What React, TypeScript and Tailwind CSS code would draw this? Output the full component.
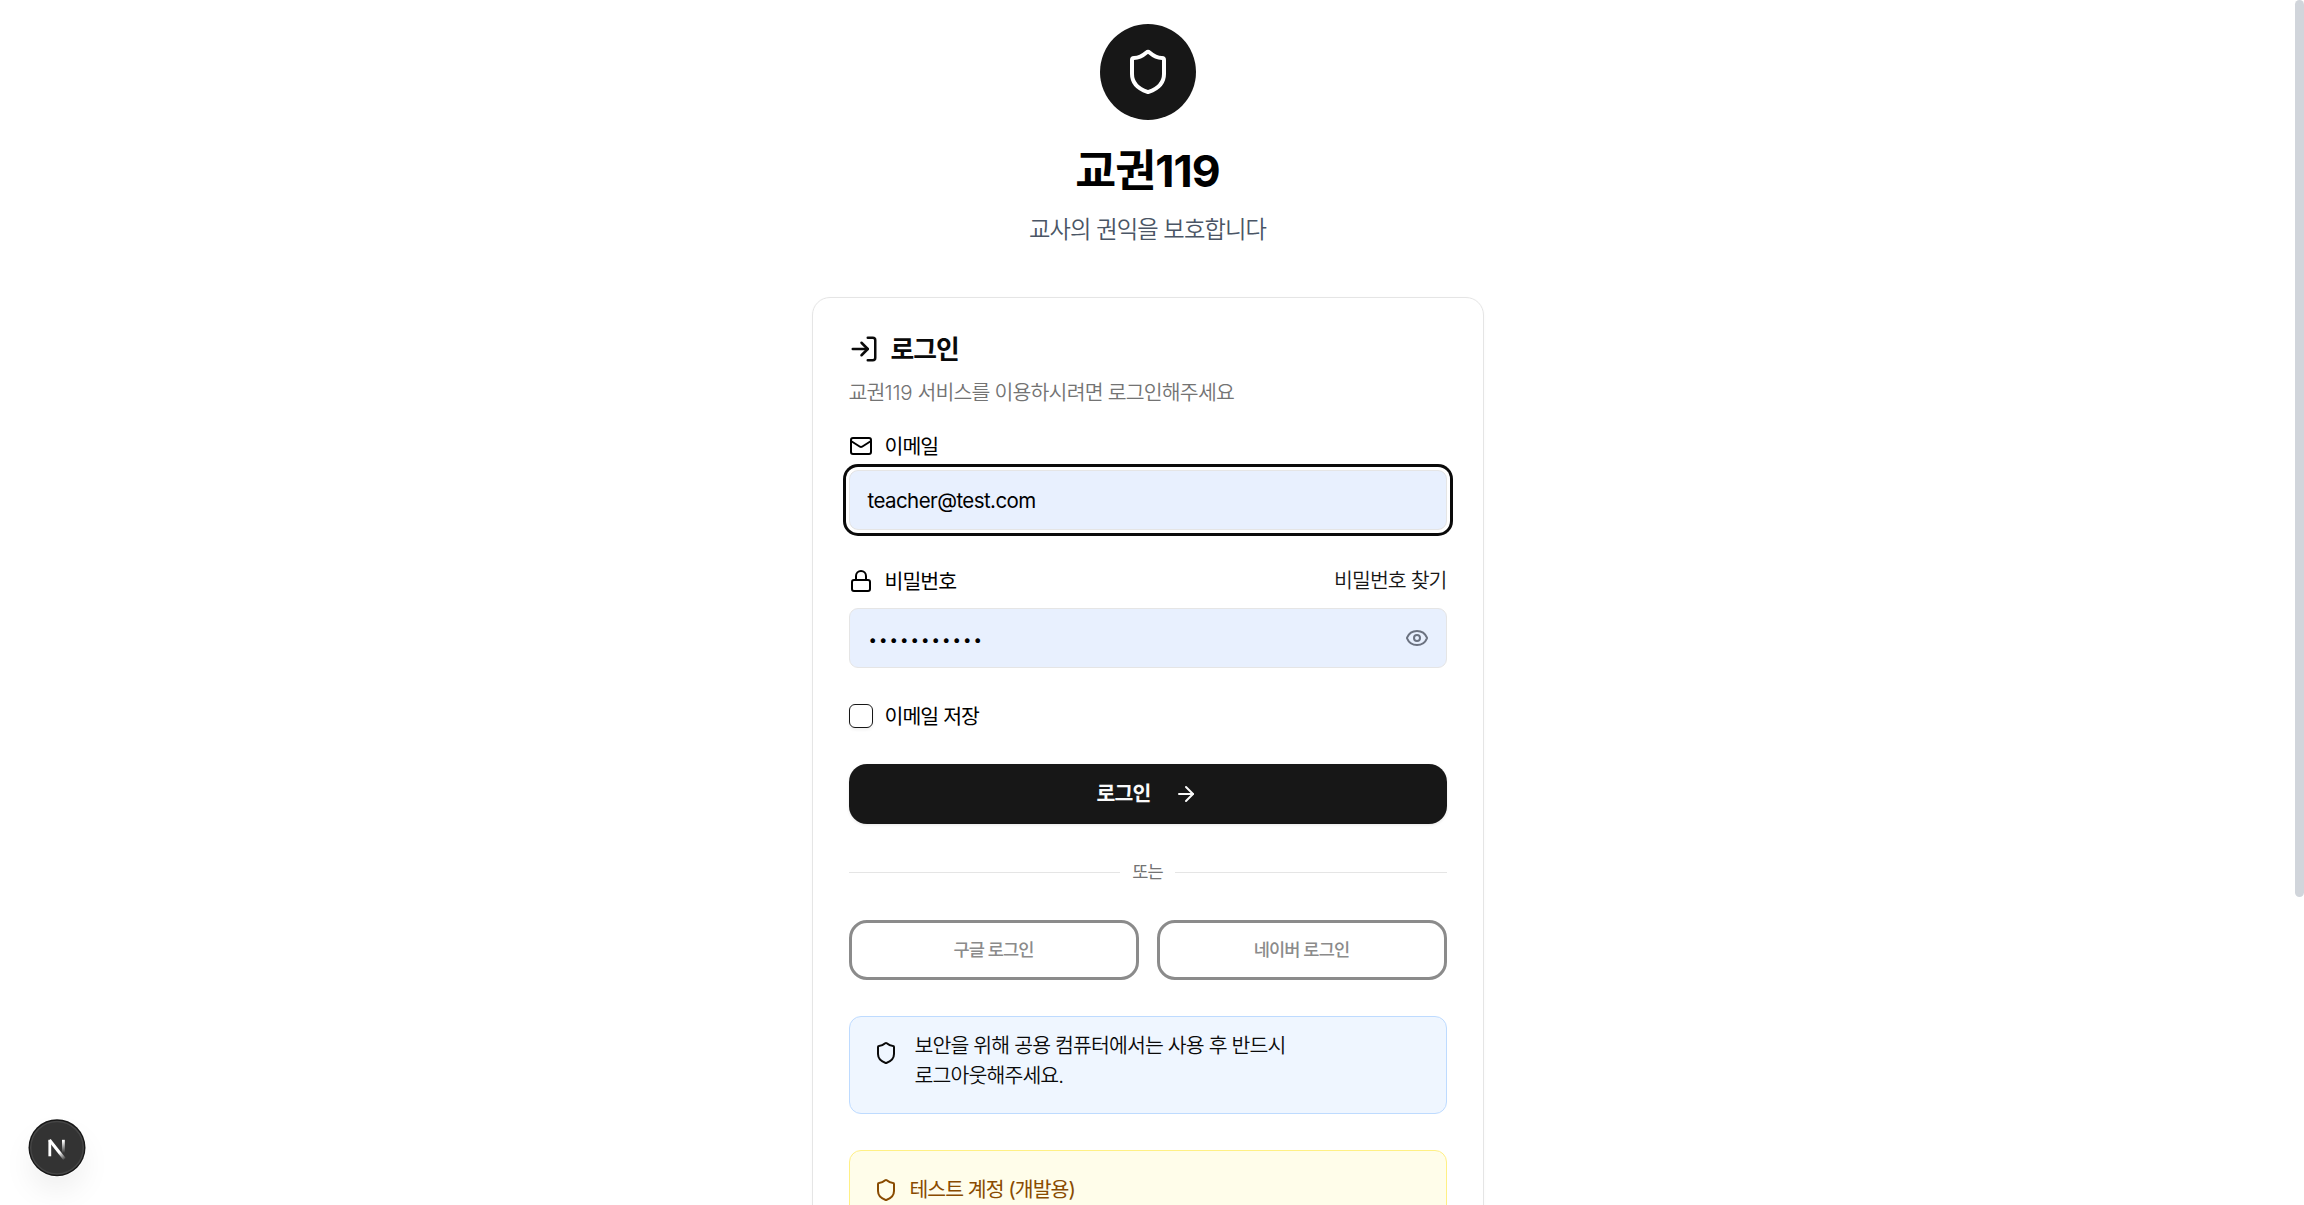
import type { ReactNode } from "react";
import { ArrowRight, Eye, Lock, LogIn, Mail, Shield } from "lucide-react";

function NextBadge() {
  return (
    <div className="absolute left-[28px] top-[1119px] h-[58px] w-[58px] rounded-full shadow-[0_16px_32px_-4px_rgba(0,0,0,0.08)]">
      <svg viewBox="0 0 58 58" className="h-full w-full" fill="none">
        <defs>
          <linearGradient id="diag" x1="32" y1="33" x2="37.5" y2="40.5" gradientUnits="userSpaceOnUse">
            <stop stopColor="#fff" />
            <stop offset="1" stopColor="#fff" stopOpacity="0" />
          </linearGradient>
          <linearGradient id="stem" x1="0" y1="22" x2="0" y2="34" gradientUnits="userSpaceOnUse">
            <stop stopColor="#fff" />
            <stop offset="1" stopColor="#fff" stopOpacity="0" />
          </linearGradient>
        </defs>
        <circle cx="29" cy="28.7" r="28.5" fill="#171717" />
        <circle cx="29" cy="28.7" r="26.3" fill="#333" stroke="#454545" strokeWidth="1.5" />
        <path d="M21.5 21L36.5 40" stroke="url(#diag)" strokeWidth="3" />
        <path d="M21.8 37.3V20.8" stroke="#fff" strokeWidth="2.8" />
        <path d="M35.4 20.8V34" stroke="url(#stem)" strokeWidth="2.8" />
      </svg>
    </div>
  );
}

function Label({ icon, children }: { icon: ReactNode; children: ReactNode }) {
  return (
    <div className="flex h-6 items-center gap-3 text-[20.5px] font-normal leading-6 text-black">
      {icon}
      <span className="pt-0.5">{children}</span>
    </div>
  );
}

export default function App() {
  return (
    <div className="relative h-[1205px] w-full overflow-hidden bg-white pr-[9px] font-['Inter','Noto_Sans_CJK_KR',sans-serif] font-[350] tracking-[-0.93px] text-[#0a0a0a]">
      <main className="mx-auto w-[672px] pt-6">
        <header className="flex flex-col items-center">
          <div className="flex h-24 w-24 items-center justify-center rounded-full bg-[#171717] text-white">
            <Shield size={48} strokeWidth={2} />
          </div>
          <h1 className="mt-6 text-[44.5px] font-bold leading-[54px] text-black">
            교권<span className="tracking-[-0.02em]">119</span>
          </h1>
          <p className="mt-[14px] h-9 text-[23.3px] leading-9 text-[#4a5565]">교사의 권익을 보호합니다</p>
        </header>

        <section className="mt-[49px] h-[1000px] rounded-[18px] border border-[#e5e5e5] px-9 pt-9 shadow-[0_1px_3px_rgba(0,0,0,0.03)]">
          <h2 className="flex h-[30px] items-center gap-3 text-[25.8px] font-semibold leading-[30px]">
            <LogIn size={30} />
            <span className="pt-0.5">로그인</span>
          </h2>
          <p className="mt-[14px] h-[30px] text-[20.5px] leading-[30px] tracking-[-0.82px] text-[#737373]">
            교권<span className="tracking-[-0.01em]">119</span> 서비스를 이용하시려면 로그인해주세요
          </p>

          <div className="mt-[26px]">
            <Label icon={<Mail size={24} />}>이메일</Label>
            <div className="mt-3 flex h-[60px] items-center rounded-[9px] border border-[#e5e5e5] bg-[#e8f0fe] px-[18px] pt-0.5 text-[20.5px] font-normal tracking-[-0.028em] text-black shadow-[0_0_0_3px_#fff,0_0_0_6px_#0a0a0a]">
              teacher@test.com
            </div>
          </div>

          <div className="mt-[39px]">
            <div className="flex items-center justify-between">
              <Label icon={<Lock size={24} />}>비밀번호</Label>
              <a className="text-[20.5px] leading-6 text-[#171717]">비밀번호 찾기</a>
            </div>
            <div className="mt-[15px] flex h-[60px] items-center justify-between rounded-[9px] border border-[#e5e5e5] bg-[#e8f0fe] px-[17px] text-black">
              <div className="flex pl-px pt-0.5 text-[15px] font-normal leading-none tracking-normal">
                {Array.from({ length: 11 }, (_, i) => (
                  <span key={i} className="w-[10.5px] text-center">•</span>
                ))}
              </div>
              <Eye size={24} className="text-[#6b7280]" />
            </div>
          </div>

          <div className="mt-9">
            <Label icon={<span className="h-6 w-6 rounded-[6px] border border-[#171717] shadow-[0_2px_3px_rgba(0,0,0,0.06)]" />}>
              이메일 저장
            </Label>
          </div>

          <button className="mt-9 flex h-[60px] w-full items-center justify-center gap-6 rounded-[18px] bg-[#171717] text-[20.5px] font-semibold text-[#fafafa] shadow-[0_1px_3px_rgba(0,0,0,0.1)]">
            <span>로그인</span>
            <ArrowRight size={24} />
          </button>

          <div className="mt-9 flex h-6 items-center gap-3 text-[17.6px] font-normal leading-6 text-[#737373]">
            <span className="h-px flex-1 bg-[#e5e5e5]" />
            <span>또는</span>
            <span className="h-px flex-1 bg-[#e5e5e5]" />
          </div>

          <div className="mt-9 grid grid-cols-2 gap-[18px] text-[17.6px] font-medium text-[#8b8b8b]">
            <button className="h-[60px] rounded-[18px] border-[3px] border-[#8b8b8b]">구글 로그인</button>
            <button className="h-[60px] rounded-[18px] border-[3px] border-[#8b8b8b]">네이버 로그인</button>
          </div>

          <div className="mt-9 flex h-[98px] gap-[17px] rounded-xl border border-[#bedbff] bg-[#eff6ff] pl-6 pt-[14px]">
            <Shield size={24} className="mt-[10px]" />
            <p className="text-[20.5px] leading-[30px] tracking-[-0.88px]">
              보안을 위해 공용 컴퓨터에서는 사용 후 반드시
              <br />
              로그아웃해주세요.
            </p>
          </div>

          <div className="mt-9 h-[200px] rounded-xl border border-[#fff085] bg-[#fffdea] pl-6 pt-[27px] text-[#894b00]">
            <div className="flex h-6 items-center gap-3 text-[20.5px] font-normal tracking-[-1px]">
              <Shield size={24} />
              <span>테스트 계정 (개발용)</span>
            </div>
          </div>
        </section>
      </main>

      <NextBadge />
      <div className="absolute right-0 top-0 h-[897px] w-[9px] rounded-full bg-[#d1d5db]" />
    </div>
  );
}
